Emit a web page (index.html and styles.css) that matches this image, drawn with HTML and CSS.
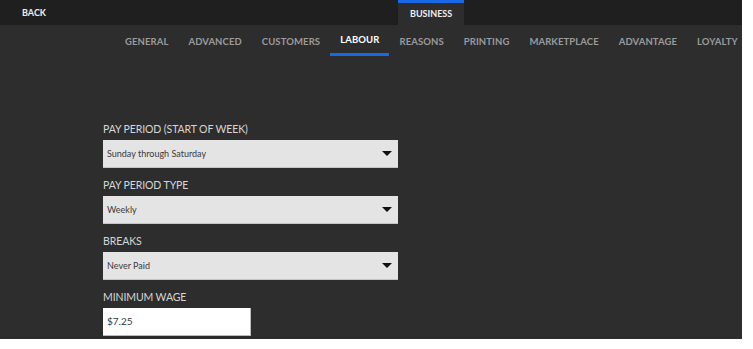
FILE: index.html
```html
<!DOCTYPE html>
<html>
<head>
<meta charset="utf-8">
<link rel="stylesheet" href="styles.css">
</head>
<body>
<div class="app">
  <header class="topbar">
    <a class="back">BACK</a>
    <div class="top-tabs">
      <a class="top-tab active">BUSINESS</a>
    </div>
  </header>
  <nav class="subnav">
    <a class="tab">GENERAL</a>
    <a class="tab">ADVANCED</a>
    <a class="tab">CUSTOMERS</a>
    <a class="tab active">LABOUR</a>
    <a class="tab">REASONS</a>
    <a class="tab">PRINTING</a>
    <a class="tab">MARKETPLACE</a>
    <a class="tab">ADVANTAGE</a>
    <a class="tab">LOYALTY</a>
  </nav>
  <main class="content">
    <div class="field">
      <label class="label">PAY PERIOD (START OF WEEK)</label>
      <div class="select"><span>Sunday through Saturday</span><i class="caret"></i></div>
    </div>
    <div class="field">
      <label class="label">PAY PERIOD TYPE</label>
      <div class="select"><span>Weekly</span><i class="caret"></i></div>
    </div>
    <div class="field">
      <label class="label">BREAKS</label>
      <div class="select"><span>Never Paid</span><i class="caret"></i></div>
    </div>
    <div class="field">
      <label class="label">MINIMUM WAGE</label>
      <div class="input">$7.25</div>
    </div>
  </main>
</div>
</body>
</html>
```
FILE: styles.css
```css
html, body {
  margin: 0;
  padding: 0;
  background: #ffffff;
}
.app {
  width: 742px;
  height: 339px;
  overflow: hidden;
  background: #2d2d2d;
  font-family: Lato, "Liberation Sans", sans-serif;
}
.topbar {
  height: 25px;
  background: #1f1f1f;
  display: flex;
  align-items: stretch;
}
.back {
  color: #f0f0f0;
  font-weight: 700;
  font-size: 9px;
  line-height: 25px;
  padding-left: 22px;
  width: 376px;
}
.top-tabs {
  display: flex;
}
.top-tab {
  color: #f0f0f0;
  font-weight: 700;
  font-size: 9px;
  background: #2d2d2d;
  border-top: 3px solid #1769e6;
  line-height: 22px;
  padding: 0 12px;
  width: 42px;
  text-align: center;
}
.subnav {
  display: flex;
  padding-left: 115px;
  height: 31px;
}
.tab {
  color: #9b9b9b;
  font-weight: 700;
  font-size: 9.5px;
  letter-spacing: 0.1px;
  padding: 0 10px;
  line-height: 33px;
  white-space: nowrap;
}
.tab.active {
  color: #ffffff;
  border-bottom: 3px solid #1769e6;
  line-height: 30px;
}
.content {
  padding: 66px 0 0 103px;
}
.field {
  margin-bottom: 10px;
}
.label {
  display: block;
  color: #d6d6d6;
  font-size: 10.5px;
  letter-spacing: -0.1px;
  line-height: 14px;
  margin-bottom: 4px;
}
.select {
  width: 295px;
  height: 28px;
  box-sizing: border-box;
  background: #e4e4e4;
  border-bottom: 1px solid #c4c4c4;
  display: flex;
  align-items: center;
  justify-content: space-between;
  padding: 0 6px 0 4px;
  color: #3a3a3a;
  font-size: 9px;
}
.caret {
  width: 0;
  height: 0;
  border-left: 5px solid transparent;
  border-right: 5px solid transparent;
  border-top: 5px solid #111;
}
.input {
  width: 148px;
  height: 28px;
  box-sizing: border-box;
  background: #ffffff;
  border-right: 1px solid #bbb;
  border-bottom: 1px solid #bbb;
  padding-left: 4px;
  line-height: 27px;
  font-size: 10px;
  color: #3a3a3a;
}
```
